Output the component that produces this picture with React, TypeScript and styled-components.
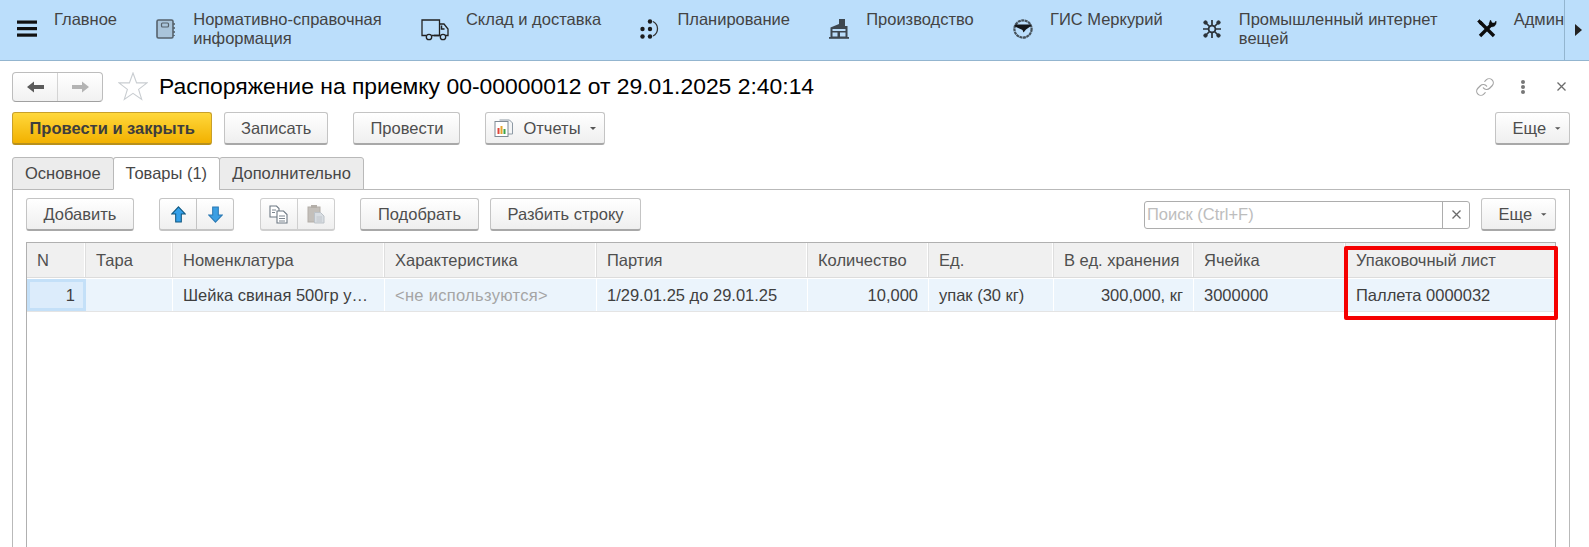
import styled, { createGlobalStyle } from "styled-components";
import { Link } from "lucide-react";

const GlobalStyle = createGlobalStyle`
  html, body {
    margin: 0;
    height: 100%;
    overflow: hidden;
    background: #fff;
  }
  body {
    font-family: "Liberation Sans", Arial, sans-serif;
    font-size: 16.5px;
    color: #4a4a4a;
  }
  #root {
    height: 100%;
  }
`;

const MenuIcon = () => (
  <svg width="20" height="20" viewBox="0 0 20 20">
    <rect x="0" y="1.500" width="20" height="3.200" fill="#111" />
    <rect x="0" y="8" width="20" height="3.200" fill="#111" />
    <rect x="0" y="14.500" width="20" height="3.200" fill="#111" />
  </svg>
);

const BookIcon = () => (
  <svg width="20" height="20" viewBox="0 0 20 20" fill="none">
    <rect x="1" y="1" width="16" height="18" rx="1.500" stroke="#56626c" strokeWidth="1.600" fill="#a9c4da" />
    <rect x="5.500" y="4" width="7" height="4" rx="1" stroke="#56626c" strokeWidth="1.200" />
    <path d="M18 4v2M18 8v2M18 12v2M18 16v1" stroke="#56626c" strokeWidth="1.600" />
  </svg>
);

const TruckIcon = () => (
  <svg width="28" height="22" viewBox="0 0 28 22" fill="none" stroke="#222" strokeWidth="1.300">
    <path d="M5 16.500H1V1h17.500v15.500H11" />
    <path d="M18.500 5H23l4 5v6.500h-2.500M18.500 16.500H13M19 16.500h0" />
    <path d="M20.500 6.500v3.500h3" strokeWidth="1.500" />
    <circle cx="8" cy="18" r="2.700" />
    <circle cx="22" cy="18" r="2.700" />
  </svg>
);

const PlanIcon = () => (
  <svg width="20" height="20" viewBox="0 0 20 20" fill="#1c1c1c">
    <circle cx="10" cy="2.500" r="2.200" />
    <circle cx="2.500" cy="10" r="2.200" />
    <circle cx="10" cy="10" r="2.200" />
    <circle cx="2.500" cy="17.500" r="2.200" />
    <circle cx="10" cy="17.500" r="2.200" />
    <path d="M13 2.500c6 3 6 11.500 0 14.500" fill="none" stroke="#333" strokeWidth="1.300" />
  </svg>
);

const FactoryIcon = () => (
  <svg width="20" height="20" viewBox="0 0 20 20" fill="#3d4750">
    <path d="M1.500 18V8.500L10 5V0h6v7h2.500v11z" />
    <rect x="3.500" y="10" width="13" height="2" fill="#b9dcf9" />
    <rect x="3.500" y="13.500" width="5" height="4" fill="#b9dcf9" />
    <rect x="11" y="13.500" width="5.500" height="4" fill="#b9dcf9" />
    <rect x="0" y="18" width="20" height="1.800" />
  </svg>
);

const MercuryIcon = () => (
  <svg width="20" height="20" viewBox="0 0 20 20" fill="none">
    <circle cx="10" cy="10" r="8.600" stroke="#46525b" strokeWidth="2.200" strokeDasharray="3 0.500" />
    <path d="M2 5.500h16V7l-5 3.500-2.500 3-1-2.500L2 7.500z" fill="#14171a" />
  </svg>
);

const IotIcon = () => (
  <svg width="20" height="20" viewBox="0 0 20 20" fill="#2b3238" stroke="#2b3238">
    <circle cx="10" cy="10" r="3.400" fill="none" strokeWidth="1.800" />
    <path
      d="M10 1v5.500M10 13.500V19M1 10h5.500M13.500 10H19M3.500 3.500l4 4M12.500 12.500l4 4M16.500 3.500l-4 4M7.500 12.500l-4 4"
      strokeWidth="1.700"
    />
    <circle cx="16.500" cy="3.500" r="1.700" />
    <circle cx="3.500" cy="3.500" r="1.700" />
    <circle cx="3.500" cy="16.500" r="1.700" />
    <circle cx="16.500" cy="16.500" r="1.700" />
  </svg>
);

const ToolsIcon = () => (
  <svg width="20" height="20" viewBox="0 0 20 20" fill="none" stroke="#0d0d0d">
    <path d="M3 3L17 17" strokeWidth="3.400" />
    <path d="M15.500 4.500L3 17" strokeWidth="3.400" />
    <path d="M0.500 2.500L2.500 0.500l3 3.200-2 2z" fill="#0d0d0d" strokeWidth="0.500" />
    <path d="M13.500 1l1.500 3h2.500l1.500-2c.8 3.500-1.700 6.500-5 5.500L12 5z" fill="#0d0d0d" strokeWidth="0.500" />
  </svg>
);

const BackIcon = ({ color }: { color: string }) => (
  <svg width="17" height="12" viewBox="0 0 17 12">
    <path d="M0 6L7 0.500V4h10v4H7v3.500z" fill={color} />
  </svg>
);

const ForwardIcon = ({ color }: { color: string }) => (
  <svg width="17" height="12" viewBox="0 0 17 12">
    <path d="M17 6L10 0.500V4H0v4h10v3.500z" fill={color} />
  </svg>
);

const StarIcon = () => (
  <svg width="30" height="29" viewBox="0 0 30 29" fill="#fff" stroke="#c9cdd1" strokeWidth="1.100">
    <path d="M15 1l3.600 9.900H29l-8.400 6.500 3.100 10L15 21.300 6.300 27.400l3.100-10L1 10.900h10.400z" />
  </svg>
);

const ReportIcon = () => (
  <svg width="20" height="20" viewBox="0 0 20 20" fill="none">
    <path d="M5.500 2h10l3 3v11H13" stroke="#8e9aa5" fill="#f4f5f6" />
    <rect x="1" y="3.500" width="13" height="15" fill="#fff" stroke="#7f8a94" />
    <rect x="3.500" y="10" width="2" height="6" fill="#e0463a" />
    <rect x="6.500" y="8" width="2" height="8" fill="#e6a52c" />
    <rect x="9.500" y="11" width="2" height="5" fill="#3ba34a" />
  </svg>
);

const CaretIcon = () => (
  <svg width="6" height="3" viewBox="0 0 6 3">
    <path d="M0 0h6L3 3z" fill="#555" />
  </svg>
);

const UpIcon = () => (
  <svg width="15" height="17" viewBox="0 0 16 18">
    <path d="M8 .800L15.300 8.500H11V17H5V8.500H.700z" fill="#34a0ea" stroke="#10577f" strokeWidth="1.100" />
  </svg>
);

const DownIcon = () => (
  <svg width="15" height="17" viewBox="0 0 16 18">
    <path d="M8 17.200L15.300 9.500H11V1H5v8.500H.700z" fill="#3b9fe3" stroke="#2b79b3" strokeWidth="1.100" />
  </svg>
);

const CopyIcon = () => (
  <svg width="19" height="19" viewBox="0 0 19 19" fill="#fff" stroke="#6d7883" strokeWidth="1.100">
    <path d="M1 1h6.500L10 3.500V12H1z" />
    <path d="M8 6h6.500L18 9.500V18H8z" />
    <path d="M3 5h4M3 7.500h3M10 11h6M10 13.500h6M10 16h6" strokeWidth="0.900" />
  </svg>
);

const PasteIcon = () => (
  <svg width="18" height="20" viewBox="0 0 18 20">
    <rect x="1" y="3" width="12" height="15" fill="#c3bfba" stroke="#b3aea8" />
    <rect x="4" y="1" width="6" height="3" fill="#b3aea8" />
    <path d="M7.500 8.500h6L17 12v7H7.500z" fill="#d8dde2" stroke="#bcc2c8" />
    <path d="M9.500 13h5.500M9.500 15h5.500M9.500 17h5.500" stroke="#bcc2c8" strokeWidth="0.800" />
  </svg>
);

const SmallCross = () => (
  <svg width="9" height="9" viewBox="0 0 9 9" stroke="#6b6b6b" strokeWidth="1.300">
    <path d="M.500.500l8 8M8.500.500l-8 8" />
  </svg>
);

const menuItems = [
  { icon: <MenuIcon />, label: "Главное" },
  { icon: <BookIcon />, label: "Нормативно-справочная\nинформация" },
  { icon: <TruckIcon />, label: "Склад и доставка" },
  { icon: <PlanIcon />, label: "Планирование" },
  { icon: <FactoryIcon />, label: "Производство" },
  { icon: <MercuryIcon />, label: "ГИС Меркурий" },
  { icon: <IotIcon />, label: "Промышленный интернет\nвещей" },
  { icon: <ToolsIcon />, label: "Админ" },
];

const columns = [
  { title: "N", width: 59 },
  { title: "Тара", width: 87 },
  { title: "Номенклатура", width: 212 },
  { title: "Характеристика", width: 212 },
  { title: "Партия", width: 211 },
  { title: "Количество", width: 121 },
  { title: "Ед.", width: 125 },
  { title: "В ед. хранения", width: 140 },
  { title: "Ячейка", width: 152 },
  { title: "Упаковочный лист", width: 210 },
];

export default function App() {
  return (
    <Page>
      <GlobalStyle />
      <TopBar>
        <MenuList>
          {menuItems.map((item) => (
            <MenuItem key={item.label}>
              <MenuIconBox>{item.icon}</MenuIconBox>
              <MenuLabel>{item.label}</MenuLabel>
            </MenuItem>
          ))}
        </MenuList>
        <ScrollRight>
          <ScrollArrow />
        </ScrollRight>
      </TopBar>

      <Content>
        <TitleRow>
          <NavGroup>
            <NavButton>
              <BackIcon color="#5b5b5b" />
            </NavButton>
            <NavButton>
              <ForwardIcon color="#b4b4b4" />
            </NavButton>
          </NavGroup>
          <StarBox>
            <StarIcon />
          </StarBox>
          <Title>Распоряжение на приемку 00-00000012 от 29.01.2025 2:40:14</Title>
          <WindowTools>
            <Link size={20} color="#a3a3a3" strokeWidth={1.4} />
            <DotsColumn>
              <Dot />
              <Dot />
              <Dot />
            </DotsColumn>
            <CloseBox>
              <SmallCross />
            </CloseBox>
          </WindowTools>
        </TitleRow>

        <CommandRow>
          <ButtonPair>
            <PrimaryButton>Провести и закрыть</PrimaryButton>
            <CommandButton>Записать</CommandButton>
          </ButtonPair>
          <CommandButton>Провести</CommandButton>
          <ReportButton>
            <ReportIcon />
            Отчеты
            <CaretIcon />
          </ReportButton>
          <MoreButton>
            Еще
            <CaretIcon />
          </MoreButton>
        </CommandRow>

        <Tabs>
          <Tab>Основное</Tab>
          <Tab $active>Товары (1)</Tab>
          <Tab>Дополнительно</Tab>
        </Tabs>

        <TabPanel>
          <Toolbar>
            <Button>Добавить</Button>
            <ButtonGroup>
              <IconButton>
                <UpIcon />
              </IconButton>
              <IconButton>
                <DownIcon />
              </IconButton>
            </ButtonGroup>
            <ButtonGroup>
              <IconButton $muted>
                <CopyIcon />
              </IconButton>
              <IconButton $muted>
                <PasteIcon />
              </IconButton>
            </ButtonGroup>
            <ButtonPair>
              <Button>Подобрать</Button>
              <Button>Разбить строку</Button>
            </ButtonPair>
            <SearchBox>
              <SearchInput placeholder="Поиск (Ctrl+F)" />
              <SearchClear>
                <SmallCross />
              </SearchClear>
            </SearchBox>
            <MoreButton $inline>
              Еще
              <CaretIcon />
            </MoreButton>
          </Toolbar>

          <Table>
            <HeaderRow>
              {columns.map((col) => (
                <HeaderCell key={col.title} $width={col.width}>
                  {col.title}
                </HeaderCell>
              ))}
            </HeaderRow>
            <DataRow>
              <ActiveCell $width={columns[0].width}>1</ActiveCell>
              <DataCell $width={columns[1].width} />
              <DataCell $width={columns[2].width}>Шейка свиная 500гр у…</DataCell>
              <DataCell $muted $width={columns[3].width}>
                &lt;не используются&gt;
              </DataCell>
              <DataCell $width={columns[4].width}>1/29.01.25 до 29.01.25</DataCell>
              <DataCell $right $width={columns[5].width}>
                10,000
              </DataCell>
              <DataCell $width={columns[6].width}>упак (30 кг)</DataCell>
              <DataCell $right $width={columns[7].width}>
                300,000, кг
              </DataCell>
              <DataCell $width={columns[8].width}>3000000</DataCell>
              <DataCell $width={columns[9].width}>Паллета 0000032</DataCell>
            </DataRow>
            <Highlight />
          </Table>
        </TabPanel>
      </Content>
    </Page>
  );
}

const Page = styled.div`
  height: 100%;
  display: flex;
  flex-direction: column;
`;

const TopBar = styled.div`
  height: 60px;
  flex: none;
  display: flex;
  background: #bbdefb;
  border-bottom: 1px solid #93b5cf;
`;

const MenuList = styled.div`
  flex: 1;
  min-width: 0;
  display: flex;
  gap: 39.2px;
  padding: 10px 0 0 17px;
  overflow: hidden;
`;

const MenuItem = styled.div`
  flex: none;
  display: flex;
  gap: 17px;
`;

const MenuIconBox = styled.div`
  height: 20px;
  margin-top: 9px;
  display: flex;
`;

const MenuLabel = styled.div`
  white-space: pre-line;
  line-height: 19px;
  color: #434343;
`;

const ScrollRight = styled.div`
  width: 24px;
  flex: none;
  display: flex;
  align-items: center;
  justify-content: center;
  border-left: 1px solid #93b5cf;
`;

const ScrollArrow = styled.div`
  width: 0;
  height: 0;
  margin-left: 3px;
  border-left: 7px solid #222;
  border-top: 6px solid transparent;
  border-bottom: 6px solid transparent;
`;

const Content = styled.div`
  flex: 1;
  min-height: 0;
  display: flex;
  flex-direction: column;
  padding: 10px 19.5px 0 12px;
`;

const TitleRow = styled.div`
  height: 31px;
  flex: none;
  display: flex;
  align-items: center;
`;

const NavGroup = styled.div`
  width: 91px;
  height: 30px;
  flex: none;
  display: flex;
  box-sizing: border-box;
  border: 1px solid #bdbdbd;
  border-bottom-color: #a0a0a0;
  border-radius: 4px;
  background: linear-gradient(#ffffff, #f1f1f1);
`;

const NavButton = styled.div`
  flex: 1;
  display: flex;
  align-items: center;
  justify-content: center;
  & + & {
    border-left: 1px solid #d4d4d4;
  }
`;

const StarBox = styled.div`
  display: flex;
  margin: 0 11px 0 15px;
`;

const Title = styled.div`
  font-size: 22.9px;
  color: #000;
  white-space: nowrap;
`;

const WindowTools = styled.div`
  margin-left: auto;
  display: flex;
  align-items: center;
  gap: 26px;
  margin-right: 4px;
`;

const CloseBox = styled.div`
  display: flex;
  margin-left: 6px;
`;

const DotsColumn = styled.div`
  display: flex;
  flex-direction: column;
  gap: 1px;
`;

const Dot = styled.span`
  width: 4px;
  height: 4px;
  border-radius: 50%;
  background: #777;
`;

const CommandRow = styled.div`
  height: 33px;
  flex: none;
  margin-top: 10px;
  display: flex;
  gap: 25px;
`;

const ButtonPair = styled.div`
  display: flex;
  gap: 11.5px;
`;

const Button = styled.div`
  height: 33px;
  box-sizing: border-box;
  flex: none;
  display: flex;
  align-items: center;
  padding: 0 16.5px;
  border: 1px solid #c4c4c4;
  border-bottom: 2px solid #a8a8a8;
  border-radius: 3px;
  background: linear-gradient(#ffffff, #efefef);
  color: #4e4e4e;
  white-space: nowrap;
`;

const CommandButton = styled(Button)`
  padding: 0 16px;
`;

const PrimaryButton = styled(Button)`
  border-color: #c8a02a;
  border-bottom-color: #b8901c;
  background: linear-gradient(#ffd83c, #f2b100);
  color: #3d3d3d;
  font-weight: bold;
`;

const ReportButton = styled(Button)`
  padding: 0 8px;
  gap: 9px;
`;

const MoreButton = styled(Button)<{ $inline?: boolean }>`
  margin-left: ${(p) => (p.$inline ? "-15px" : "auto")};
  width: 75px;
  padding: 0 8px 0 17px;
  gap: 9px;
`;

const Tabs = styled.div`
  flex: none;
  margin-top: 12px;
  display: flex;
  position: relative;
  z-index: 1;
  margin-bottom: -1px;
`;

const Tab = styled.div<{ $active?: boolean }>`
  height: 33px;
  display: flex;
  align-items: center;
  padding: 0 12px;
  box-sizing: border-box;
  border: 1px solid #b9b9b9;
  border-bottom-color: ${(p) => (p.$active ? "#fff" : "#b9b9b9")};
  border-radius: 3px 3px 0 0;
  background: ${(p) => (p.$active ? "#fff" : "#ececec")};
  color: #474747;
  & + & {
    margin-left: -1px;
  }
`;

const TabPanel = styled.div`
  flex: 1;
  min-height: 0;
  display: flex;
  flex-direction: column;
  padding: 8px 13px 0;
  border: 1px solid #b9b9b9;
  border-bottom: none;
`;

const Toolbar = styled.div`
  height: 33px;
  flex: none;
  display: flex;
  align-items: center;
  gap: 25.5px;
`;

const ButtonGroup = styled.div`
  display: flex;
`;

const IconButton = styled(Button)<{ $muted?: boolean }>`
  width: 38px;
  padding: 0;
  justify-content: center;
  border-color: ${(p) => (p.$muted ? "#cfcfcf" : "#c4c4c4")};
  border-radius: 0;
  &:first-child {
    border-radius: 3px 0 0 3px;
  }
  &:last-child {
    width: 37px;
    border-radius: 0 3px 3px 0;
    border-left: none;
  }
`;

const SearchBox = styled.div`
  margin-left: auto;
  width: 326px;
  height: 28px;
  box-sizing: border-box;
  display: flex;
  border: 1px solid #adadad;
  border-radius: 3px;
`;

const SearchInput = styled.input`
  flex: 1;
  min-width: 0;
  border: none;
  outline: none;
  padding: 0 2px;
  background: transparent;
  font: inherit;
  &::placeholder {
    color: #bdbdbd;
    opacity: 1;
  }
`;

const SearchClear = styled.div`
  width: 26px;
  display: flex;
  align-items: center;
  justify-content: center;
  border-left: 1px solid #adadad;
`;

const Table = styled.div`
  position: relative;
  flex: 1;
  margin-top: 11px;
  border: 1px solid #b0b0b0;
  border-bottom: none;
`;

const HeaderRow = styled.div`
  display: flex;
  height: 35px;
  box-sizing: border-box;
  border-bottom: 1px solid #dcdcdc;
`;

const HeaderCell = styled.div<{ $width: number }>`
  box-sizing: border-box;
  flex: none;
  width: ${(p) => p.$width}px;
  display: flex;
  align-items: center;
  padding: 0 10px;
  background: #f0f0f0;
  border-right: 1px solid #dedede;
  box-shadow: inset -1px 0 0 #fff;
  color: #4f4f4f;
  &:last-child {
    border-right: none;
    box-shadow: none;
    flex: 1;
  }
`;

const DataRow = styled.div`
  display: flex;
  height: 33px;
  box-sizing: border-box;
  margin-top: 1px;
  border-bottom: 1px solid #e4e4e4;
  background: #ebf4fc;
`;

const DataCell = styled.div<{ $width: number; $right?: boolean; $muted?: boolean }>`
  box-sizing: border-box;
  flex: none;
  width: ${(p) => p.$width}px;
  display: flex;
  align-items: center;
  justify-content: ${(p) => (p.$right ? "flex-end" : "flex-start")};
  padding: 0 10px;
  border-right: 1px solid #fff;
  color: ${(p) => (p.$muted ? "#a5a5a5" : "#3f3f3f")};
  letter-spacing: ${(p) => (p.$muted ? "0.3px" : "normal")};
  white-space: nowrap;
  overflow: hidden;
  &:last-child {
    flex: 1;
    border-right: none;
  }
`;

const ActiveCell = styled(DataCell)`
  justify-content: flex-end;
  padding-right: 8px;
  background: #dcecfb;
  border: 3px solid #c4e0f8;
`;

const Highlight = styled.div`
  position: absolute;
  top: 3px;
  right: -3px;
  width: 214px;
  height: 74px;
  box-sizing: border-box;
  border: 4px solid #f50000;
  border-radius: 2px;
  pointer-events: none;
`;
